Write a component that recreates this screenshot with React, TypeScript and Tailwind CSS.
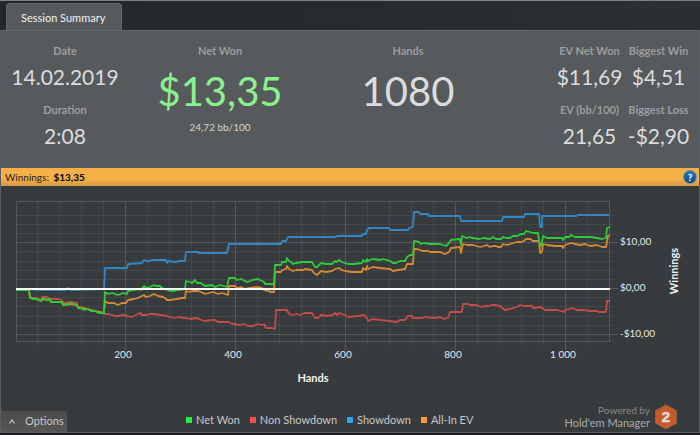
type Series = { name: string; stroke: string; swatch: string; points: string }

const nonShowdown: Series = {
  name: "Non Showdown",
  stroke: "#c34b4c",
  swatch: "bg-[#fb4f4f]",
  points:
    "16,290 29,290 30,297 33,298 37,298 41,300 42,297 47,297 50,299 58,299 62,300 63,303 70,302 77,303 78,307 82,307 87,309 95,311 105,314 108,314 112,315 115,316 118,316 123,315 128,316 131,317 134,316 140,313 142,315 147,315 150,314 154,314 160,315 167,316 170,317 174,318 178,317 186,318 190,319 197,318 201,320 205,321 212,320 215,320 218,322 228,322 233,324 240,325 244,324 248,326 253,326 258,324 262,325 264,324 266,328 272,328 275,329 276,310 287,310 289,314 293,315 297,314 300,315 305,313 312,313 315,318 318,318 321,315 326,316 333,315 335,313 337,315 339,313 345,315 348,317 358,316 364,315 366,317 367,318 368,321 373,319 380,320 390,321 397,322 400,320 405,320 408,316 412,316 413,318 422,318 425,317 435,318 440,317 444,319 448,318 450,312 462,312 463,304 468,304 470,305 476,305 482,307 485,306 489,306 492,305 495,305 500,306 505,310 510,309 513,308 517,307 520,305 524,306 532,306 533,308 541,307 545,310 550,310 557,310 561,311 564,312 565,310 569,309 572,308 577,310 583,310 590,311 597,311 599,312 606,312 607,301 610,301",
}

const showdown: Series = {
  name: "Showdown",
  stroke: "#3286c4",
  swatch: "bg-[#34a1ee]",
  points:
    "16,289 30,289 37,290 50,290 66,290 68,288 70,290 80,290 104,289 105,268 127,268 128,264 142,263 144,260 147,261 150,261 152,260 166,260 167,263 168,261 175,262 180,261 185,261 186,252 198,252 199,253 227,253 229,244 281,244 282,241 286,241 288,237 336,237 337,236 362,236 363,234 366,234 367,230 369,228 389,228 390,230 408,230 409,228 413,227 414,212 419,212 420,214 428,214 429,216 460,216 461,221 502,221 503,217 524,217 525,214 539,214 540,227 542,227 542,216 576,216 578,215 609,215",
}

const allIn: Series = {
  name: "All-In EV",
  stroke: "#d48932",
  swatch: "bg-[#fb9c36]",
  points:
    "16,290 29,290 30,298 36,299 41,301 43,299 50,300 51,302 62,302 63,305 70,304 77,305 78,308 87,309 95,311 104,313 105,301 108,303 114,303 118,305 122,303 126,303 128,300 134,299 138,298 140,297 144,295 146,297 150,296 154,294 158,296 163,297 165,298 167,300 170,300 177,299 182,298 185,298 186,291 190,292 192,291 198,291 201,292 205,294 209,293 213,292 218,294 222,293 228,295 229,286 235,286 237,288 241,287 245,289 250,288 258,287 262,288 264,290 267,291 269,290 270,292 274,292 275,272 281,272 282,270 286,269 287,266 289,269 293,271 296,270 303,270 305,269 312,270 314,273 317,275 319,273 321,271 326,272 332,271 335,269 339,268 342,270 345,271 352,272 362,272 363,268 366,270 367,266 368,269 373,267 380,268 390,269 393,271 398,270 405,269 407,264 410,264 413,264 414,249 417,249 423,251 428,251 430,252 440,252 445,254 449,252 451,248 460,247 461,253 463,244 467,245 473,245 480,247 484,246 487,245 490,247 493,246 496,246 498,247 501,247 503,244 507,245 510,244 517,242 521,242 524,241 526,239 530,239 533,241 539,241 540,253 542,252 543,244 547,245 555,246 562,246 563,248 565,245 571,243 575,244 580,245 585,244 590,246 597,245 602,247 606,247 608,236 610,235",
}

const netWon: Series = {
  name: "Net Won",
  stroke: "#30c93a",
  swatch: "bg-[#2df23c]",
  points:
    "16,290 29,290 30,297 33,299 37,299 41,301 43,298 46,300 50,299 51,302 62,302 63,305 66,304 68,305 70,303 77,305 78,308 82,308 84,310 87,309 91,311 95,311 99,313 104,313 105,292 108,294 112,293 115,294 118,295 123,293 127,294 128,291 133,290 139,289 141,290 144,286 146,288 150,287 152,286 154,285 156,286 160,286 162,288 167,290 173,291 178,290 185,289 186,281 190,282 192,283 195,280 197,283 201,283 205,286 212,285 215,287 220,285 227,287 229,278 235,278 237,280 241,279 245,281 247,282 250,281 252,280 258,279 262,281 264,282 265,284 270,284 274,284 275,265 281,265 282,262 286,262 287,258 289,261 291,262 293,264 296,263 302,262 312,262 315,267 317,267 319,265 321,263 326,264 332,264 335,261 337,262 339,260 342,262 345,263 348,264 354,264 362,263 363,260 366,262 367,259 368,261 370,260 373,259 380,260 383,259 390,261 393,263 396,263 400,261 405,261 407,257 410,255 413,255 414,241 419,242 421,244 424,243 430,244 440,244 446,246 449,243 451,240 460,239 461,245 462,236 467,238 470,237 472,238 480,239 483,238 490,239 493,237 496,239 501,239 503,237 506,238 510,238 513,236 517,236 521,234 524,234 526,231 530,232 533,233 538,233 540,246 541,246 543,236 547,238 555,238 562,238 563,240 565,237 569,237 571,235 575,237 580,237 590,237 597,238 602,239 606,238 607,228 610,227",
}

const legend = [netWon, nonShowdown, showdown, allIn]

const minorX = Array.from({ length: 27 }, (_, i) => 15 + i * 22).filter((x) => x > 15 && x < 610)
const minorY = [215, 224, 233, 251, 261, 270, 279, 297, 306, 316, 325]
const hands = [
  { x: 125, label: "200" },
  { x: 235, label: "400" },
  { x: 345, label: "600" },
  { x: 455, label: "800" },
  { x: 565, label: "1 000" },
]
const dollars = [
  { y: 242, label: "$10,00" },
  { y: 288, label: "$0,00" },
  { y: 334, label: "-$10,00" },
]

function Stat({ label, value }: { label: string; value: string }) {
  return (
    <div className="text-center whitespace-nowrap">
      <dt className="text-[11px] leading-4 font-bold text-[#9c9e9f]">{label}</dt>
      <dd className="mt-0.5 text-[21px] leading-8 text-[#dcdcdc]">{value}</dd>
    </div>
  )
}

function Summary() {
  return (
    <section className="flex border-t border-[#65696b] bg-[#565a5c] pt-3 pr-1.5 pb-4">
      <dl className="grid flex-1 grid-cols-[128fr_182fr_194fr_50fr]">
        <div className="flex flex-col gap-[9px]">
          <Stat label="Date" value="14.02.2019" />
          <Stat label="Duration" value="2:08" />
        </div>
        <div className="text-center">
          <dt className="text-[11px] leading-4 font-bold text-[#9c9e9f]">Net Won</dt>
          <dd className="mt-2 text-[40px] leading-12 text-[#8cf08f]">$13,35</dd>
          <dd className="mt-1 text-[10px] leading-4 text-[#d2d3d3]">24,72 bb/100</dd>
        </div>
        <div className="text-center">
          <dt className="text-[11px] leading-4 font-bold text-[#9c9e9f]">Hands</dt>
          <dd className="mt-2 text-[40px] leading-12 text-[#dcdcdc]">1080</dd>
        </div>
      </dl>
      <dl className="grid w-[138px] grid-cols-2 gap-y-[9px]">
        <Stat label="EV Net Won" value="$11,69" />
        <Stat label="Biggest Win" value="$4,51" />
        <Stat label="EV (bb/100)" value="21,65" />
        <Stat label="Biggest Loss" value="-$2,90" />
      </dl>
    </section>
  )
}

function WinningsChart() {
  return (
    <svg viewBox="1 186 698 204" className="block w-full" role="img" aria-label="Winnings by hands">
      <g stroke="#43474a" shapeRendering="crispEdges">
        {minorX.map((x) => (
          <line key={x} x1={x + 0.5} x2={x + 0.5} y1="202" y2="346" />
        ))}
        {minorY.map((y) => (
          <line key={y} x1="16" x2="614" y1={y + 0.5} y2={y + 0.5} />
        ))}
      </g>
      <g stroke="#55595b" shapeRendering="crispEdges" fill="none">
        {hands.map(({ x }) => (
          <line key={x} x1={x + 0.5} x2={x + 0.5} y1="202" y2="350" />
        ))}
        {dollars.map(({ y }) => (
          <line key={y} x1="16" x2="618" y1={y + 0.5} y2={y + 0.5} />
        ))}
        <rect x="16.5" y="201.5" width="593" height="140" />
      </g>
      <g fill="none" strokeWidth="1.8" strokeLinejoin="round">
        {[showdown, nonShowdown, allIn, netWon].map((s) => (
          <polyline key={s.name} stroke={s.stroke} points={s.points} />
        ))}
      </g>
      <line x1="16" x2="610" y1="289" y2="289" stroke="#fff" strokeWidth="2" />
      <g fill="#e6e7e7" fontSize="10">
        {hands.map(({ x, label }) => (
          <text key={x} x={x - 2} y="358" textAnchor="middle">
            {label}
          </text>
        ))}
        {dollars.map(({ y, label }) => (
          <text key={y} x="620" y={y + 3}>
            {label}
          </text>
        ))}
      </g>
      <g fill="#f0f0f0" fontSize="11" fontWeight="700" textAnchor="middle">
        <text x="313" y="382">
          Hands
        </text>
        <text transform="translate(678 271) rotate(-90)">Winnings</text>
      </g>
    </svg>
  )
}

function Logo() {
  return (
    <svg width="24" height="26" viewBox="0 0 24 26" aria-hidden="true">
      <path
        d="M12 1 22.4 6.6V19.2L12 25 1.6 19.2V6.6Z"
        fill="#c95a28"
        stroke="#8d6a58"
        strokeWidth="0.8"
        strokeLinejoin="round"
      />
      <text
        x="12"
        y="18"
        textAnchor="middle"
        fontFamily="Liberation Sans, sans-serif"
        fontSize="15"
        fontWeight="700"
        fill="#dedad8"
        stroke="#dedad8"
        strokeWidth="0.6"
      >
        2
      </text>
    </svg>
  )
}

export default function App() {
  return (
    <main className="flex min-h-screen flex-col border-t border-[#77868e] bg-[#1b1c20] font-[Lato,sans-serif]">
      <header className="flex h-[29px] items-end bg-linear-to-r from-[#22272a] to-[#2a2f31] px-1.5">
        <button className="h-[27px] rounded-t-sm border border-b-0 border-[#65696b] bg-[#565a5c] pt-0.5 pr-4 pl-3.5 text-[11px] whitespace-nowrap text-[#f2f2f2]">
          Session Summary
        </button>
      </header>
      <div className="mb-0.5 flex flex-1 flex-col border-x border-b border-[#5b5e60] bg-[#383b3d]">
        <Summary />
        <div className="flex h-[18px] items-center justify-between bg-linear-to-b from-[#f6b048] from-60% to-[#d99840] pr-0.5 pl-1 text-[10px] text-[#24211c]">
          <p>
            Winnings: <b className="ml-0.5 text-black">$13,35</b>
          </p>
          <button
            aria-label="Help"
            className="size-3.5 rounded-full border border-[#5f8bad] bg-linear-to-b from-[#2f78b4] to-[#0b4a88] text-[10px] leading-none font-black text-white"
          >
            ?
          </button>
        </div>
        <WinningsChart />
        <footer className="mt-auto flex items-end justify-between">
          <button className="flex h-[21px] w-[66px] items-center gap-2.5 bg-linear-to-b from-[#4b4b4b] to-[#565656] pl-2 text-[11px] text-[#c6c7c7]">
            <svg width="6" height="5" viewBox="0 0 6 5" fill="none" stroke="currentColor" aria-hidden="true">
              <path d="M.5 4.5 3 1 5.5 4.5" strokeWidth="1.2" />
            </svg>
            Options
          </button>
          <ul className="flex gap-2.5 pb-1 pl-7 text-[11px] leading-4 text-[#c6c7c7]">
            {legend.map((s) => (
              <li key={s.name} className="flex items-center gap-1 whitespace-nowrap">
                <span className={`size-1.5 ${s.swatch}`} />
                {s.name}
              </li>
            ))}
          </ul>
          <div className="flex items-center gap-1 pr-[21px] pb-0.5 text-right whitespace-nowrap">
            <p className="text-[#a9abab]">
              <span className="block text-[10px] leading-3 text-[#85888a]">Powered by</span>
              <span className="block text-[11px] leading-[14px]">Hold'em Manager</span>
            </p>
            <Logo />
          </div>
        </footer>
      </div>
    </main>
  )
}
